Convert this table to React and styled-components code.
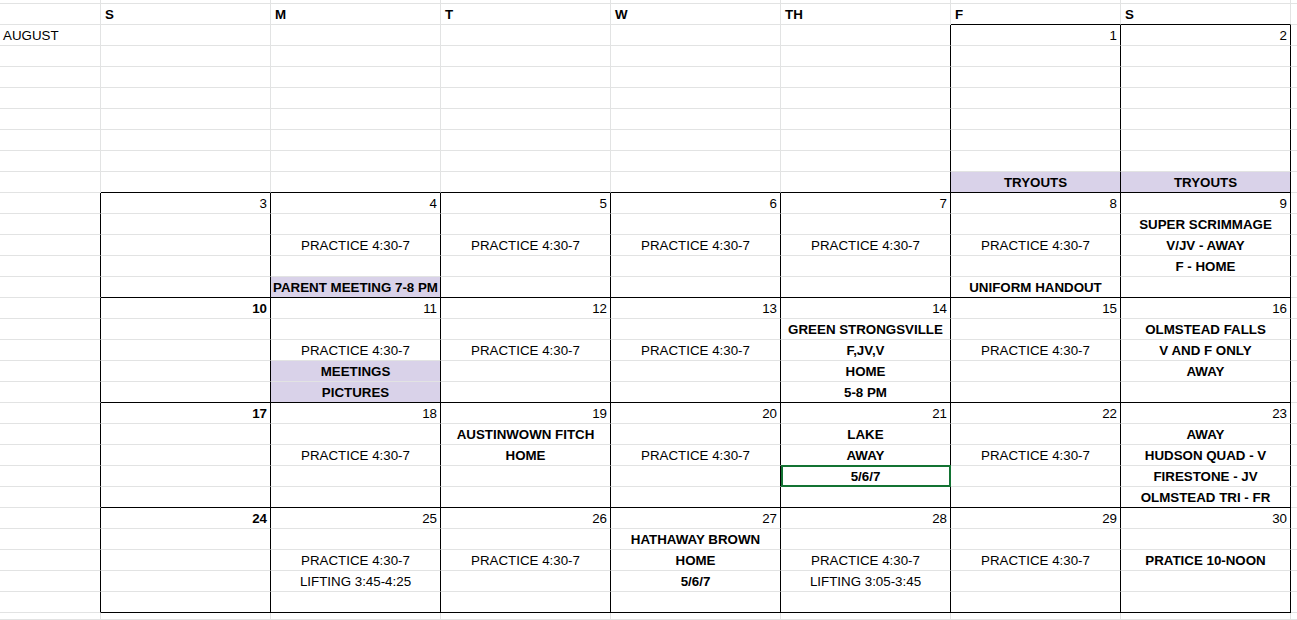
import styled, { createGlobalStyle } from 'styled-components';

const GlobalStyle = createGlobalStyle`
  html, body {
    margin: 0;
    padding: 0;
    background: #fff;
    overflow: hidden;
  }
  body {
    font-family: "Liberation Sans", Arial, sans-serif;
  }
`;

const GRID = '#e2e3e3';
const INK = '#000';
const LAVENDER = '#d9d2e9';

const Sheet = styled.div`
  display: grid;
  grid-template-columns: 101px repeat(7, 170px) 1fr;
  grid-template-rows: 4px repeat(29, 21px) 1fr;
  width: 1297px;
  height: 620px;
  font-size: 10pt;
  line-height: 15px;
  color: #000;
`;

const Cell = styled.div`
  position: relative;
  box-sizing: border-box;
  display: flex;
  align-items: flex-end;
  justify-content: flex-start;
  padding: 0 3px 2px;
  border-right: 1px solid ${(p) => (p.$edgeRight ? INK : GRID)};
  border-bottom: 1px solid ${(p) => (p.$edgeBottom ? INK : GRID)};
  background: ${(p) => (p.$fill ? LAVENDER : '#fff')};
  font-weight: ${(p) => (p.$bold ? 700 : 400)};
  white-space: nowrap;
`;

const HeadCell = styled(Cell)`
  font-weight: 700;
  padding-left: 4px;
`;

const DateCell = styled(Cell)`
  justify-content: flex-end;
`;

const EntryCell = styled(Cell)`
  justify-content: center;
`;

const Selection = styled.span`
  position: absolute;
  top: -1px;
  left: 0;
  right: -1px;
  bottom: -1px;
  box-sizing: border-box;
  border: 2px solid #137333;
  pointer-events: none;
`;

const P = 'PRACTICE 4:30-7';
const b = (text, more) => ({ text, bold: true, ...more });
const hi = (text) => b(text, { fill: true });

const HEADS = ['', 'S', 'M', 'T', 'W', 'TH', 'F', 'S'];

const WEEKS = [
  {
    top: 10,
    days: [
      { date: '3' },
      { date: '4', lines: [null, P, null, hi('PARENT MEETING 7-8 PM')] },
      { date: '5', lines: [null, P] },
      { date: '6', lines: [null, P] },
      { date: '7', lines: [null, P] },
      { date: '8', lines: [null, P, null, b('UNIFORM HANDOUT')] },
      { date: '9', lines: [b('SUPER SCRIMMAGE'), b('V/JV - AWAY'), b('F - HOME')] },
    ],
  },
  {
    top: 15,
    days: [
      { date: '10', bold: true },
      { date: '11', lines: [null, P, hi('MEETINGS'), hi('PICTURES')] },
      { date: '12', lines: [null, P] },
      { date: '13', lines: [null, P] },
      { date: '14', lines: [b('GREEN STRONGSVILLE'), b('F,JV,V'), b('HOME'), b('5-8 PM')] },
      { date: '15', lines: [null, P] },
      { date: '16', lines: [b('OLMSTEAD FALLS'), b('V AND F ONLY'), b('AWAY')] },
    ],
  },
  {
    top: 20,
    days: [
      { date: '17', bold: true },
      { date: '18', lines: [null, P] },
      { date: '19', lines: [b('AUSTINWOWN FITCH'), b('HOME')] },
      { date: '20', lines: [null, P] },
      { date: '21', lines: [b('LAKE'), b('AWAY'), b('5/6/7', { selected: true })] },
      { date: '22', lines: [null, P] },
      {
        date: '23',
        lines: [b('AWAY'), b('HUDSON QUAD - V'), b('FIRESTONE - JV'), b('OLMSTEAD TRI - FR')],
      },
    ],
  },
  {
    top: 25,
    days: [
      { date: '24', bold: true },
      { date: '25', lines: [null, P, 'LIFTING 3:45-4:25'] },
      { date: '26', lines: [null, P] },
      { date: '27', lines: [b('HATHAWAY BROWN'), b('HOME'), b('5/6/7')] },
      { date: '28', lines: [null, P, 'LIFTING 3:05-3:45'] },
      { date: '29', lines: [null, P] },
      { date: '30', lines: [null, b('PRATICE 10-NOON')] },
    ],
  },
];

// every filled cell of the sheet, keyed by "row:col"
const buildCells = () => {
  const cells = {};
  HEADS.forEach((h, c) => {
    if (h) cells[`1:${c}`] = { kind: 'head', text: h };
  });
  cells['2:0'] = { kind: 'label', text: 'AUGUST' };

  // first week only has Friday and Saturday
  cells['2:6'] = { kind: 'date', text: '1' };
  cells['2:7'] = { kind: 'date', text: '2' };
  cells['9:6'] = { kind: 'entry', ...hi('TRYOUTS') };
  cells['9:7'] = { kind: 'entry', ...hi('TRYOUTS') };

  WEEKS.forEach(({ top, days }) => {
    days.forEach((day, i) => {
      const col = i + 1;
      cells[`${top}:${col}`] = { kind: 'date', text: day.date, bold: day.bold };
      (day.lines || []).forEach((line, j) => {
        if (!line) return;
        const item = typeof line === 'string' ? { text: line } : line;
        cells[`${top + 1 + j}:${col}`] = { kind: 'entry', ...item };
      });
    });
  });
  return cells;
};

const WEEK_ENDS = [9, 14, 19, 24, 29];

const edgeBottom = (r, c) =>
  (r === 1 && (c === 6 || c === 7)) || (WEEK_ENDS.includes(r) && c >= 1 && c <= 7);

const edgeRight = (r, c) =>
  (r >= 2 && r <= 9 && c >= 5 && c <= 7) || (r >= 10 && r <= 29 && c <= 7);

const KINDS = {
  head: HeadCell,
  label: Cell,
  date: DateCell,
  entry: EntryCell,
};

const App = () => {
  const cells = buildCells();
  const out = [];

  for (let r = 0; r < 31; r++) {
    for (let c = 0; c < 9; c++) {
      const data = cells[`${r}:${c}`];
      const Kind = data ? KINDS[data.kind] : Cell;
      out.push(
        <Kind
          key={`${r}-${c}`}
          $edgeRight={edgeRight(r, c)}
          $edgeBottom={edgeBottom(r, c)}
          $fill={data?.fill}
          $bold={data?.bold}
        >
          {data?.text}
          {data?.selected && <Selection />}
        </Kind>
      );
    }
  }

  return (
    <>
      <GlobalStyle />
      <Sheet>{out}</Sheet>
    </>
  );
};

export default App;
